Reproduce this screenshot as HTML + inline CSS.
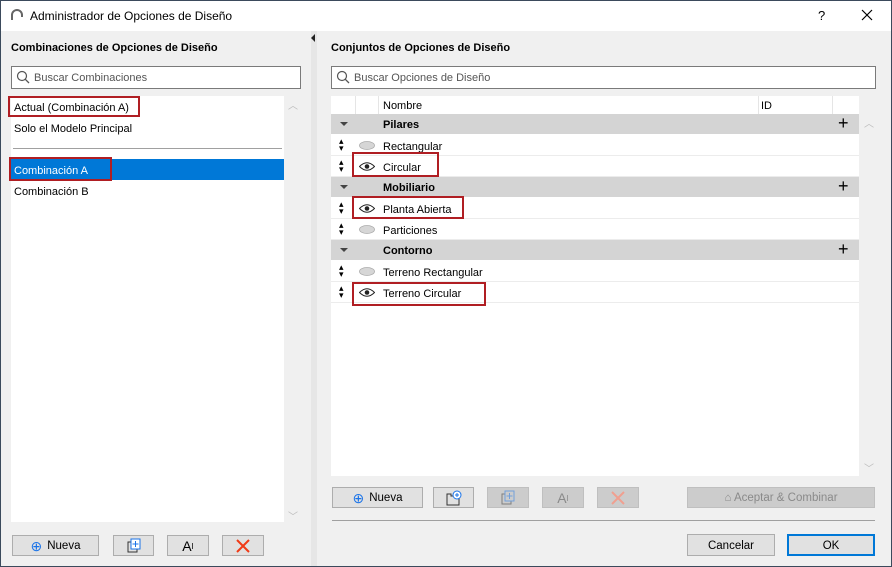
<!DOCTYPE html>
<html><head><meta charset="utf-8"><style>
*{box-sizing:border-box;margin:0;padding:0}
body{width:892px;height:567px;overflow:hidden;font-family:"Liberation Sans",sans-serif;font-size:11px;color:#000;background:#f0f0f0;position:relative}
.a{position:absolute}
.win{left:0;top:0;width:892px;height:567px;border:1px solid #3b4a5c}
.btn{position:absolute;background:#e1e1e1;border:1px solid #adadad;display:flex;align-items:center;justify-content:center;font-size:11.5px;padding-top:1px}
.dis{background:#cccccc;border-color:#bfbfbf;color:#8a8a8a}
.row{position:absolute;left:331px;width:528px;height:21px;border-bottom:1px solid #ececec;background:#fff}
.grp{background:#d4d4d4;font-weight:bold;border-bottom:1px solid #fff}
.row span{position:absolute;top:6px}
.red{position:absolute;border:2px solid #b01e23}
.eye{position:absolute;left:28px;top:6px;width:16px;height:9px}
</style></head><body>
<div class="a" style="left:0;top:0;width:892px;height:31px;background:#fff"></div>
<svg class="a" style="left:10px;top:9px" width="14" height="12"><path d="M2 11 V6 A5 5 0 0 1 12 6 V8" fill="none" stroke="#666" stroke-width="2"/></svg>
<div class="a" style="left:30px;top:9px;font-size:12px">Administrador de Opciones de Diseño</div>
<div class="a" style="left:818px;top:8px;font-size:13px">?</div>
<svg class="a" style="left:861px;top:9px" width="12" height="12"><path d="M1 1L11 11M11 1L1 11" stroke="#000" stroke-width="1.2"/></svg>

<div class="a" style="left:311px;top:31px;width:6px;height:536px;background:#e6e6e6"></div>
<svg class="a" style="left:311px;top:34px" width="5" height="8"><path d="M4 0V8L0 4Z" fill="#222"/></svg>

<div class="a" style="left:11px;top:42px;font-weight:bold">Combinaciones de Opciones de Diseño</div>
<div class="a" style="left:11px;top:66px;width:290px;height:23px;background:#fff;border:1px solid #7a7a7a"></div>
<svg class="a" style="left:16px;top:70px" width="14" height="14"><circle cx="6" cy="6" r="4.5" fill="none" stroke="#555" stroke-width="1.2"/><path d="M9.3 9.3L13 13" stroke="#555" stroke-width="1.3"/></svg>
<div class="a" style="left:34px;top:72px;color:#555">Buscar Combinaciones</div>
<div class="a" style="left:11px;top:96px;width:273px;height:426px;background:#fff"></div>
<div class="a" style="left:14px;top:102px">Actual (Combinación A)</div>
<div class="red" style="left:8px;top:96px;width:132px;height:21px"></div>
<div class="a" style="left:14px;top:123px">Solo el Modelo Principal</div>
<div class="a" style="left:13px;top:148px;width:269px;height:1px;background:#a0a0a0"></div>
<div class="a" style="left:11px;top:159px;width:273px;height:21px;background:#0078d7"></div>
<div class="a" style="left:14px;top:165px;color:#fff">Combinación A</div>
<div class="red" style="left:9px;top:157px;width:103px;height:24px"></div>
<div class="a" style="left:14px;top:186px">Combinación B</div>
<div class="a" style="left:288px;top:97px;color:#bbb;font-size:10px">︿</div>
<div class="a" style="left:288px;top:508px;color:#bbb;font-size:10px">﹀</div>

<div class="btn" style="left:12px;top:535px;width:87px;height:21px"><span style="color:#1a73e8;font-size:14px;margin-right:5px">⊕</span>Nueva</div>
<div class="btn" style="left:113px;top:535px;width:41px;height:21px"><svg width="16" height="16"><rect x="2" y="4" width="9" height="10" fill="none" stroke="#333"/><rect x="5" y="1" width="9" height="10" fill="#fff" stroke="#1a73e8"/><path d="M9.5 3V9M6.5 6H12.5" stroke="#1a73e8"/></svg></div>
<div class="btn" style="left:167px;top:535px;width:42px;height:21px;font-size:14px">A<sup style="font-size:8px">I</sup></div>
<div class="btn" style="left:222px;top:535px;width:42px;height:21px"><svg width="14" height="14"><path d="M1 1L13 13M13 1L1 13" stroke="#f03a17" stroke-width="2"/></svg></div>

<div class="a" style="left:331px;top:42px;font-weight:bold">Conjuntos de Opciones de Diseño</div>
<div class="a" style="left:331px;top:66px;width:545px;height:23px;background:#fff;border:1px solid #7a7a7a"></div>
<svg class="a" style="left:336px;top:70px" width="14" height="14"><circle cx="6" cy="6" r="4.5" fill="none" stroke="#555" stroke-width="1.2"/><path d="M9.3 9.3L13 13" stroke="#555" stroke-width="1.3"/></svg>
<div class="a" style="left:354px;top:72px;color:#555">Buscar Opciones de Diseño</div>
<div class="a" style="left:331px;top:96px;width:528px;height:380px;background:#fff"></div>
<div class="a" style="left:355px;top:96px;width:1px;height:18px;background:#e5e5e5"></div>
<div class="a" style="left:378px;top:96px;width:1px;height:18px;background:#e5e5e5"></div>
<div class="a" style="left:758px;top:96px;width:1px;height:18px;background:#e5e5e5"></div>
<div class="a" style="left:832px;top:96px;width:1px;height:18px;background:#e5e5e5"></div>
<div class="a" style="left:383px;top:100px">Nombre</div>
<div class="a" style="left:761px;top:100px">ID</div>
<div class="a" style="left:864px;top:115px;color:#bbb;font-size:10px">︿</div>
<div class="a" style="left:864px;top:460px;color:#bbb;font-size:10px">﹀</div>

<div class="row grp" style="top:114px"><svg class="a" style="left:9px;top:8px" width="8" height="5"><path d="M0 0H8L4 4Z" fill="#444"/></svg><span style="left:52px;top:5px">Pilares</span><span style="left:507px;top:-1px;font-size:18px;font-weight:normal">+</span></div>
<div class="row" style="top:135px"><span style="left:8px;font-size:9px;top:3px;line-height:7px">▴<br>▾</span><svg class="eye" viewBox="0 0 16 9"><ellipse cx="8" cy="4.5" rx="7.5" ry="4" fill="#d6d6d6" stroke="#aaa" stroke-width=".8"/></svg><span style="left:52px">Rectangular</span></div>
<div class="row" style="top:156px"><span style="left:8px;font-size:9px;top:3px;line-height:7px">▴<br>▾</span><svg class="eye" viewBox="0 0 16 9"><path d="M0.5 4.5Q8 -3 15.5 4.5Q8 12 0.5 4.5Z" fill="#fff" stroke="#222"/><circle cx="8" cy="4.5" r="2.3" fill="#222"/></svg><span style="left:52px">Circular</span></div>
<div class="row grp" style="top:177px"><svg class="a" style="left:9px;top:8px" width="8" height="5"><path d="M0 0H8L4 4Z" fill="#444"/></svg><span style="left:52px;top:5px">Mobiliario</span><span style="left:507px;top:-1px;font-size:18px;font-weight:normal">+</span></div>
<div class="row" style="top:198px"><span style="left:8px;font-size:9px;top:3px;line-height:7px">▴<br>▾</span><svg class="eye" viewBox="0 0 16 9"><path d="M0.5 4.5Q8 -3 15.5 4.5Q8 12 0.5 4.5Z" fill="#fff" stroke="#222"/><circle cx="8" cy="4.5" r="2.3" fill="#222"/></svg><span style="left:52px">Planta Abierta</span></div>
<div class="row" style="top:219px"><span style="left:8px;font-size:9px;top:3px;line-height:7px">▴<br>▾</span><svg class="eye" viewBox="0 0 16 9"><ellipse cx="8" cy="4.5" rx="7.5" ry="4" fill="#d6d6d6" stroke="#aaa" stroke-width=".8"/></svg><span style="left:52px">Particiones</span></div>
<div class="row grp" style="top:240px"><svg class="a" style="left:9px;top:8px" width="8" height="5"><path d="M0 0H8L4 4Z" fill="#444"/></svg><span style="left:52px;top:5px">Contorno</span><span style="left:507px;top:-1px;font-size:18px;font-weight:normal">+</span></div>
<div class="row" style="top:261px"><span style="left:8px;font-size:9px;top:3px;line-height:7px">▴<br>▾</span><svg class="eye" viewBox="0 0 16 9"><ellipse cx="8" cy="4.5" rx="7.5" ry="4" fill="#d6d6d6" stroke="#aaa" stroke-width=".8"/></svg><span style="left:52px">Terreno Rectangular</span></div>
<div class="row" style="top:282px"><span style="left:8px;font-size:9px;top:3px;line-height:7px">▴<br>▾</span><svg class="eye" viewBox="0 0 16 9"><path d="M0.5 4.5Q8 -3 15.5 4.5Q8 12 0.5 4.5Z" fill="#fff" stroke="#222"/><circle cx="8" cy="4.5" r="2.3" fill="#222"/></svg><span style="left:52px">Terreno Circular</span></div>
<div class="red" style="left:352px;top:152px;width:87px;height:25px"></div>
<div class="red" style="left:352px;top:196px;width:112px;height:23px"></div>
<div class="red" style="left:352px;top:282px;width:134px;height:24px"></div>

<div class="btn" style="left:332px;top:487px;width:91px;height:21px"><span style="color:#1a73e8;font-size:14px;margin-right:5px">⊕</span>Nueva</div>
<div class="btn" style="left:433px;top:487px;width:41px;height:21px"><svg width="18" height="16"><path d="M2 4H6V6H14V15H2Z" fill="none" stroke="#333"/><circle cx="12" cy="5" r="4" fill="#fff" stroke="#1a73e8"/><path d="M12 3V7M10 5H14" stroke="#1a73e8"/></svg></div>
<div class="btn dis" style="left:487px;top:487px;width:42px;height:21px"><svg width="16" height="16" opacity=".5"><rect x="2" y="4" width="9" height="10" fill="none" stroke="#333"/><rect x="5" y="1" width="9" height="10" fill="#ccc" stroke="#1a73e8"/><path d="M9.5 3V9M6.5 6H12.5" stroke="#1a73e8"/></svg></div>
<div class="btn dis" style="left:542px;top:487px;width:42px;height:21px;font-size:14px">A<sup style="font-size:8px">I</sup></div>
<div class="btn dis" style="left:597px;top:487px;width:42px;height:21px"><svg width="14" height="14"><path d="M1 1L13 13M13 1L1 13" stroke="#f0a090" stroke-width="2"/></svg></div>
<div class="btn dis" style="left:687px;top:487px;width:188px;height:21px">⌂ Aceptar &amp; Combinar</div>
<div class="a" style="left:332px;top:520px;width:543px;height:1px;background:#a0a0a0"></div>
<div class="btn" style="left:687px;top:534px;width:88px;height:22px">Cancelar</div>
<div class="btn" style="left:787px;top:534px;width:88px;height:22px;border:2px solid #0078d7">OK</div>
<div class="a win"></div>
</body></html>
